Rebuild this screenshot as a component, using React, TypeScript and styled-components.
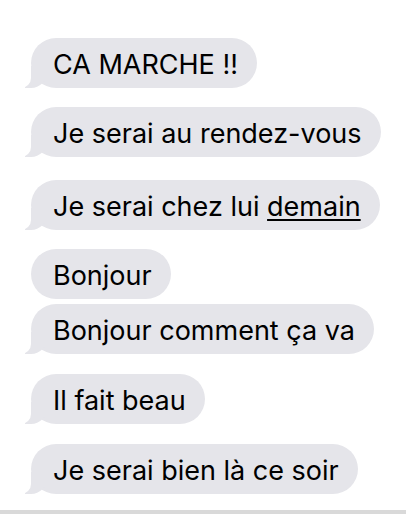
import React from "react";
import styled, { createGlobalStyle } from "styled-components";

const Global = createGlobalStyle`
  html, body { margin: 0; padding: 0; background: #ffffff; }
  body { font-family: Inter, "Liberation Sans", Arial, sans-serif; }
`;

const Thread = styled.div`
  width: 406px;
  height: 514px;
  box-sizing: border-box;
  display: flex;
  flex-direction: column;
  align-items: flex-start;
  padding: 38px 0 0 31px;
  position: relative;
  overflow: hidden;
  border-bottom: 4px solid #d9d9d9;
`;

const Bubble = styled.div<{ $gap: number; $tail: boolean }>`
  position: relative;
  margin-top: ${(p) => p.$gap}px;
  background: #e5e5ea;
  color: #000;
  font-size: 27px;
  line-height: 32px;
  padding: 11px 19px 7px 22px;
  border-radius: 25px;
  white-space: nowrap;

  ${(p) =>
    p.$tail &&
    `
    &::before {
      content: "";
      position: absolute;
      z-index: 0;
      bottom: 0;
      left: -6px;
      width: 22px;
      height: 22px;
      background: #e5e5ea;
      border-bottom-right-radius: 16px;
    }
    &::after {
      content: "";
      position: absolute;
      z-index: 1;
      bottom: 0;
      left: -10px;
      width: 10px;
      height: 22px;
      background: #ffffff;
      border-bottom-right-radius: 10px;
    }
  `}
`;

const Label = styled.span`
  position: relative;
  z-index: 2;
`;

const Link = styled.span`
  text-decoration: underline;
  text-underline-offset: 3px;
  text-decoration-thickness: 2px;
`;

const messages: { text: React.ReactNode; gap: number; tail: boolean }[] = [
  { text: "CA MARCHE !!", gap: 0, tail: true },
  { text: "Je serai au rendez-vous", gap: 19, tail: true },
  {
    text: (
      <>
        Je serai chez lui <Link>demain</Link>
      </>
    ),
    gap: 23,
    tail: true,
  },
  { text: "Bonjour", gap: 19, tail: false },
  { text: "Bonjour comment ça va", gap: 5, tail: true },
  { text: "Il fait beau", gap: 20, tail: true },
  { text: "Je serai bien là ce soir", gap: 20, tail: true },
];

export default function App() {
  return (
    <>
      <Global />
      <Thread>
        {messages.map((m, i) => (
          <Bubble key={i} $gap={m.gap} $tail={m.tail}>
            <Label>{m.text}</Label>
          </Bubble>
        ))}
      </Thread>
    </>
  );
}
